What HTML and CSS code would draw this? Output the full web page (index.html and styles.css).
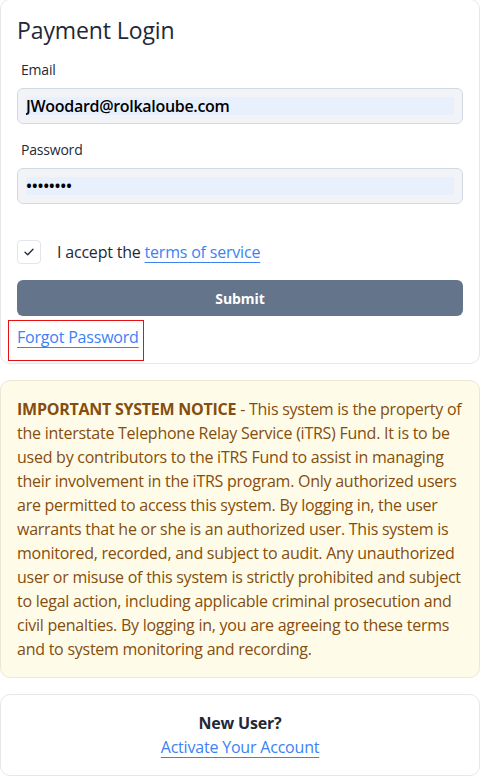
FILE: index.html
```html
<!DOCTYPE html>
<html lang="en">
<head>
<meta charset="utf-8">
<title>Payment Login</title>
<link rel="stylesheet" href="styles.css">
</head>
<body>
<main class="page">
  <section class="card login-card">
    <h1 class="title">Payment Login</h1>
    <form class="form" onsubmit="return false">
      <div class="field">
        <label class="label" for="email">Email</label>
        <input class="input" id="email" type="email" value="JWoodard@rolkaloube.com">
      </div>
      <div class="field">
        <label class="label" for="password">Password</label>
        <input class="input" id="password" type="password" value="password">
      </div>
      <div class="accept-row">
        <span class="checkbox" role="checkbox" aria-checked="true">
          <svg viewBox="0 0 10 8" width="10" height="8" aria-hidden="true"><path d="M1 4.2 L3.7 6.8 L9 1.2" fill="none" stroke="#1f2937" stroke-width="1.3" stroke-linecap="round" stroke-linejoin="round"/></svg>
        </span>
        <span class="accept-text">I accept the <a class="link" href="#">terms of service</a></span>
      </div>
      <button class="submit" type="submit">Submit</button>
      <div class="forgot-box">
        <a class="link" href="#">Forgot Password</a>
      </div>
    </form>
  </section>

  <section class="card notice-card">
    <p class="notice-text"><strong>IMPORTANT SYSTEM NOTICE</strong> - This system is the property of the interstate Telephone Relay Service (iTRS) Fund. It is to be used by contributors to the iTRS Fund to assist in managing their involvement in the iTRS program. Only authorized users are permitted to access this system. By logging in, the user warrants that he or she is an authorized user. This system is monitored, recorded, and subject to audit. Any unauthorized user or misuse of this system is strictly prohibited and subject to legal action, including applicable criminal prosecution and civil penalties. By logging in, you are agreeing to these terms and to system monitoring and recording.</p>
  </section>

  <section class="card newuser-card">
    <div class="newuser-title">New User?</div>
    <a class="link" href="#">Activate Your Account</a>
  </section>
</main>
</body>
</html>
```

FILE: styles.css
```css
* { box-sizing: border-box; }

html, body {
  margin: 0;
  padding: 0;
  background: #ffffff;
}

body {
  font-family: "Open Sans", "Noto Sans", "Liberation Sans", sans-serif;
  font-size: 16px;
  line-height: 24px;
  color: #1f2937;
  letter-spacing: -0.2px;
}

.page {
  width: 480px;
  display: flex;
  flex-direction: column;
  gap: 16px;
  margin-top: -1px;
}

.card {
  border: 1px solid #e5e7eb;
  border-radius: 10px;
  background: #ffffff;
  padding: 16px;
}

.login-card {
  padding-top: 14px;
  padding-bottom: 2px;
}

.title {
  margin: 0;
  font-size: 23px;
  line-height: 32px;
  font-weight: 400;
  color: #1f2937;
  letter-spacing: -0.1px;
}

.form {
  display: flex;
  flex-direction: column;
}

.field {
  display: flex;
  flex-direction: column;
  margin-top: 14px;
}

.field + .field { margin-top: 16px; }

.label {
  font-size: 14px;
  line-height: 20px;
  padding-left: 4px;
  margin-bottom: 8px;
  color: #1f2937;
}

.input {
  height: 36px;
  padding: 8px;
  border: 1px solid #cfd8e3;
  border-radius: 6px;
  background: linear-gradient(#e8f0fe, #e8f0fe) content-box, linear-gradient(#f1f3f6, #f1f3f6) padding-box;
  font-family: inherit;
  font-size: 16px;
  line-height: 18px;
  font-weight: 600;
  color: #000000;
  letter-spacing: -0.3px;
  outline: none;
}

.accept-row {
  display: flex;
  align-items: flex-start;
  gap: 16px;
  margin-top: 36px;
}

.checkbox {
  width: 24px;
  height: 24px;
  border: 1px solid #e2e5ea;
  border-radius: 4px;
  background: #ffffff;
  display: flex;
  align-items: center;
  justify-content: center;
  flex: none;
}

.accept-text {
  color: #1f2937;
}

.link {
  color: #3b82f6;
  text-decoration: underline;
  text-decoration-thickness: 1px;
  text-underline-offset: 4px;
}

.submit {
  margin-top: 16px;
  height: 36px;
  border: none;
  border-radius: 6px;
  background: #64748b;
  color: #ffffff;
  font-family: inherit;
  font-size: 14px;
  font-weight: 700;
  letter-spacing: -0.1px;
  cursor: pointer;
}

.forgot-box {
  align-self: flex-start;
  margin-top: 4px;
  margin-left: -9px;
  border: 1px solid #e81010;
  padding: 4px 4px 11px 8px;
}

.notice-card {
  background: #fefce8;
  border-color: #ebe8d8;
}

.notice-text {
  margin: 0;
  color: #854d0e;
  letter-spacing: -0.25px;
}

.notice-text strong { font-weight: 700; }

.newuser-card {
  display: flex;
  flex-direction: column;
  align-items: center;
}

.newuser-title {
  font-weight: 700;
  color: #1f2937;
}
```
